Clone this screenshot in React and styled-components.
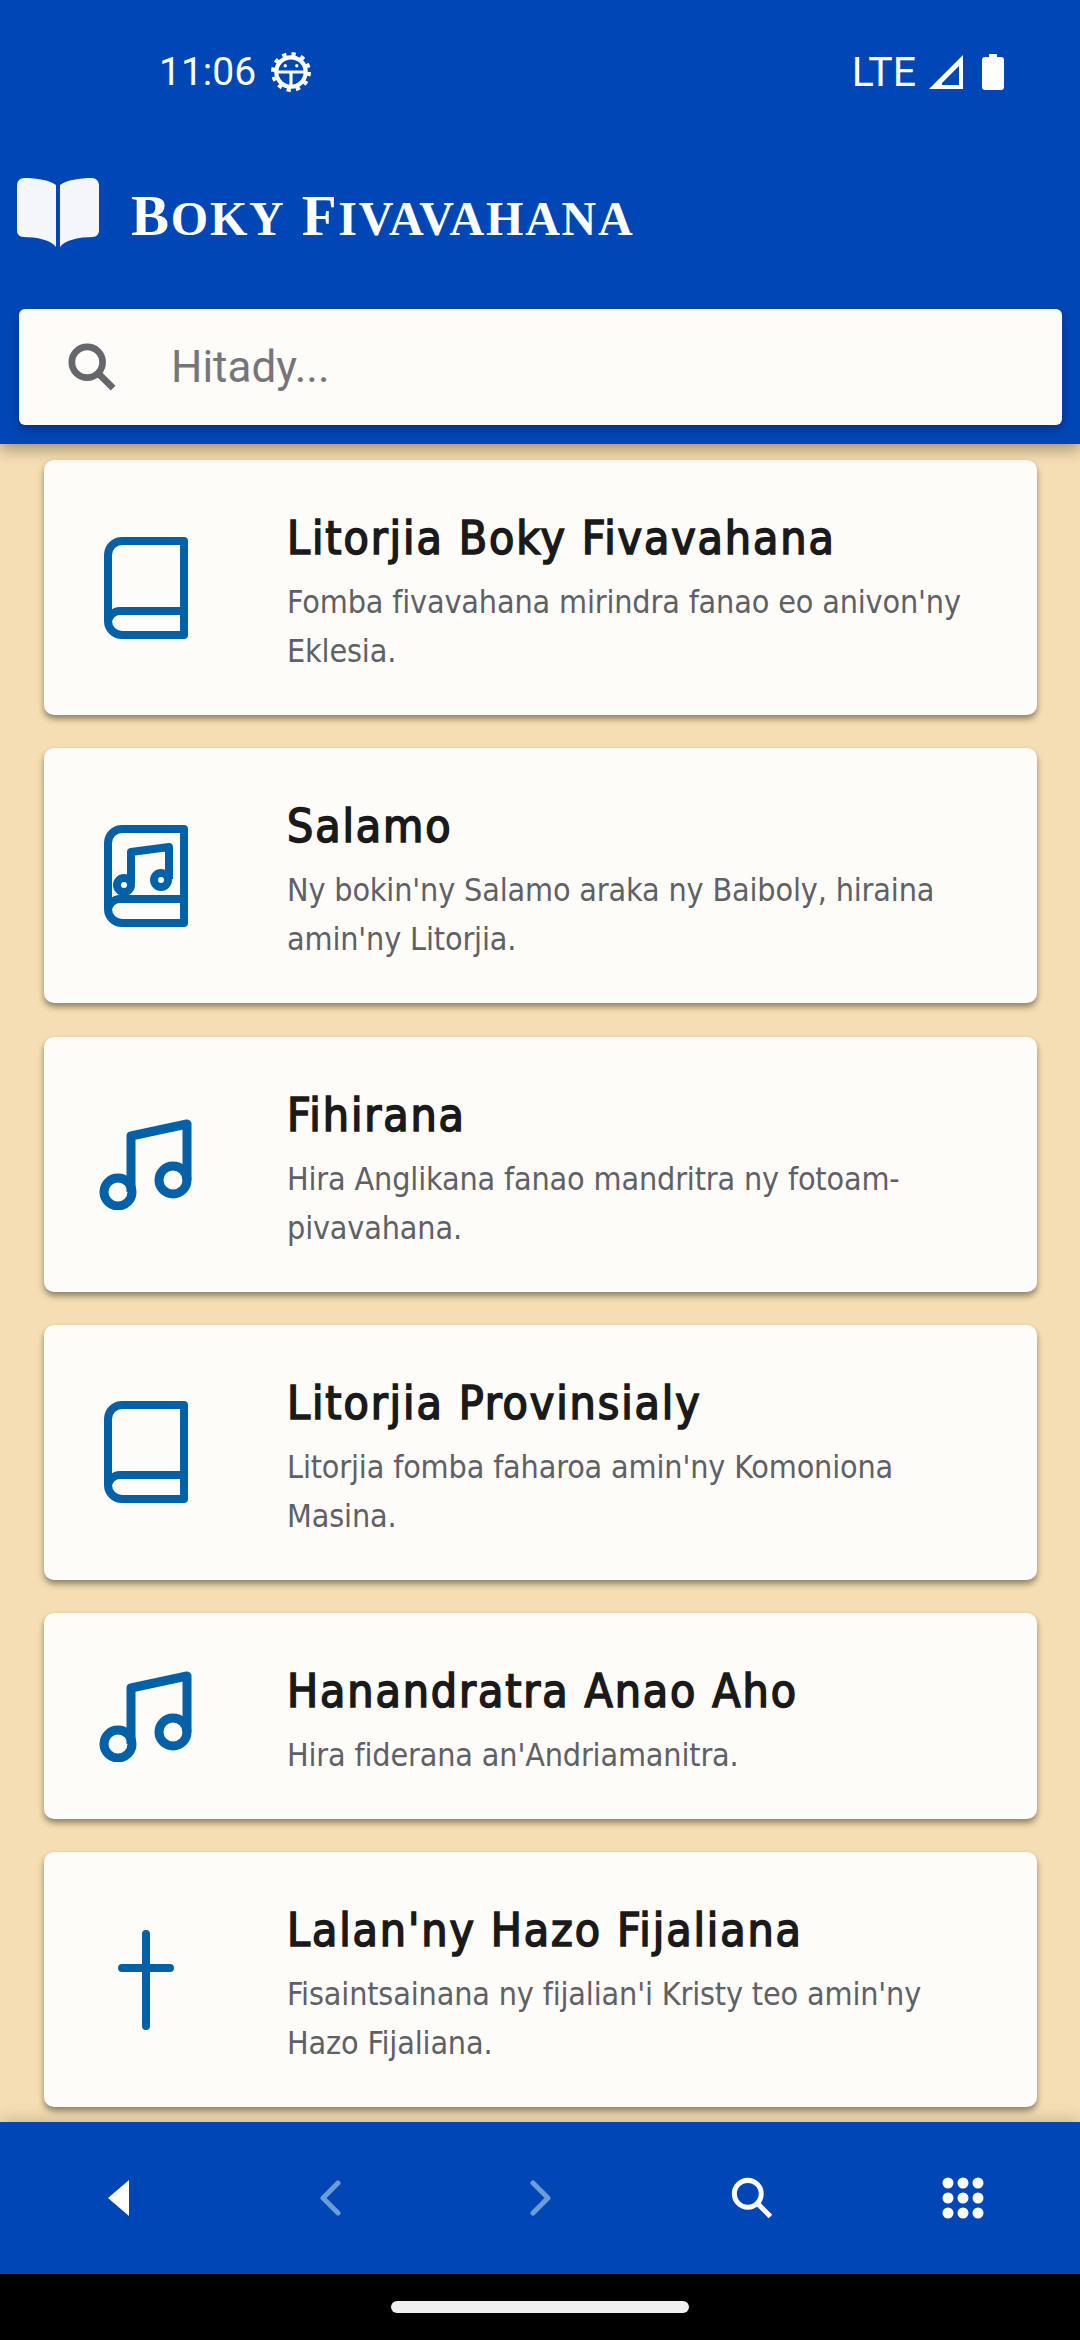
import React from 'react';
import styled, { createGlobalStyle } from 'styled-components';

const Global = createGlobalStyle`
  html, body { margin: 0; padding: 0; background: #000; }
  * { box-sizing: border-box; }
`;

const Screen = styled.div`
  width: 1080px;
  height: 2340px;
  display: flex;
  flex-direction: column;
  background: #000;
  overflow: hidden;
`;

const Header = styled.header`
  position: relative;
  z-index: 2;
  height: 444px;
  flex: none;
  background: #0046b5;
  box-shadow: 0 6px 14px rgba(0, 0, 0, 0.32);
  display: flex;
  flex-direction: column;
`;

const StatusBar = styled.div`
  height: 144px;
  padding: 0 76px 0 159px;
  display: flex;
  align-items: center;
  justify-content: space-between;
  color: #fff;
  font-family: Roboto, sans-serif;
`;

const StatusGroup = styled.div`
  display: flex;
  align-items: center;
  gap: ${p => p.$gap || 12}px;
`;

const StatusText = styled.span`
  font-size: ${p => p.$size}px;
`;

const Brand = styled.div`
  height: 138px;
  padding-left: 17px;
  display: flex;
  align-items: center;
  gap: 32px;
  color: #fff;
`;

const BrandTitle = styled.h1`
  margin: 4px 0 0;
  font-family: "Liberation Serif", serif;
  font-weight: 700;
  font-size: 57px;
  letter-spacing: 1.8px;
  line-height: 1;
`;

const SmallCaps = styled.span`
  font-size: 48px;
  text-transform: uppercase;
`;

const SearchBox = styled.div`
  margin: 27px 18px 0 19px;
  height: 116px;
  background: #fdfcf8;
  border-radius: 6px;
  box-shadow: 0 4px 8px rgba(0, 0, 0, 0.3);
  display: flex;
  align-items: center;
  padding-left: 49px;
  gap: 55px;
  font-family: Roboto, sans-serif;
  font-size: 44px;
  color: #75757a;
`;

const List = styled.main`
  flex: 1;
  min-height: 0;
  overflow: hidden;
  background: #f5deb3;
  padding: 16px 43px 0 44px;
  display: flex;
  flex-direction: column;
  gap: 33.3px;
`;

const Card = styled.article`
  flex: none;
  height: ${p => p.$short ? 206 : 255}px;
  background: #fdfcf8;
  border-radius: 10px;
  box-shadow: 0 4px 6px rgba(0, 0, 0, 0.42);
  display: flex;
  align-items: center;
`;

const CardIcon = styled.div`
  width: 243px;
  flex: none;
  display: flex;
  justify-content: center;
  color: #0061a8;
  padding-left: 20px;
  padding-right: 60px;
`;

const CardBody = styled.div`
  flex: 1;
  min-width: 0;
  padding: 9px 40px 0 0;
`;

const CardTitle = styled.h2`
  margin: 0 0 10px;
  font-family: "DejaVu Sans", sans-serif;
  font-stretch: condensed;
  font-weight: 400;
  font-size: 46px;
  letter-spacing: 1.9px;
  -webkit-text-stroke: 1.6px #1a1a1a;
  line-height: 60px;
  color: #1a1a1a;
`;

const CardText = styled.p`
  margin: 0;
  font-family: "DejaVu Sans", sans-serif;
  font-stretch: condensed;
  font-size: 32px;
  letter-spacing: -0.15px;
  line-height: 49px;
  color: #5f6066;
`;

const BottomNav = styled.nav`
  position: relative;
  z-index: 2;
  height: 152px;
  flex: none;
  background: #0046b5;
  box-shadow: 0 -4px 14px rgba(0, 0, 0, 0.15);
  padding-left: 2px;
  display: grid;
  grid-template-columns: repeat(5, 211px);
  justify-content: center;
  align-items: center;
  justify-items: center;
  color: #fff;
`;

const NavSlot = styled.div`
  display: flex;
  color: ${p => p.$dim ? '#6d9dd8' : '#fff'};
`;

const GestureBar = styled.div`
  height: 66px;
  flex: none;
  background: #000;
  display: flex;
  justify-content: center;
  padding-top: 27px;
`;

const HomePill = styled.div`
  width: 298px;
  height: 12px;
  border-radius: 6px;
  background: #f0f0f0;
`;

const BookShape = ({ children }) => (
  <svg width="84" height="102" viewBox="0 0 84 102" fill="none" stroke="currentColor" strokeWidth="8" strokeLinejoin="round">
    <path d="M80 4H18A14 14 0 0 0 4 18V84A14 14 0 0 0 18 98H80ZM4 86A12 12 0 0 1 16 74H80" />
    {children}
  </svg>
);

const MusicNote = () => (
  <svg width="94" height="92" viewBox="0 0 94 92" fill="none" stroke="currentColor" strokeWidth="9" strokeLinejoin="round">
    <path d="M32 74V18L88 6V62" />
    <circle cx="19" cy="74" r="14" />
    <circle cx="74" cy="62" r="14" />
  </svg>
);

const Cross = () => (
  <svg width="56" height="100" viewBox="0 0 56 100" fill="none" stroke="currentColor" strokeWidth="8" strokeLinecap="round">
    <path d="M28 4V96M4 38H52" />
  </svg>
);

const MusicBook = () => (
  <BookShape>
    <path d="M27 58V27L65 22V54" />
    <circle cx="20" cy="60" r="7" />
    <circle cx="57" cy="55" r="7" />
  </BookShape>
);

const SearchIcon = ({ size = 50, color = 'currentColor', width = 7 }) => (
  <svg width={size} height={size} viewBox="0 0 50 50" fill="none" stroke={color} strokeWidth={width}>
    <circle cx="20" cy="20" r="16" />
    <path d="M31 31L47 47" />
  </svg>
);

const GearIcon = () => (
  <svg width="42" height="42" viewBox="0 0 40 40" fill="none" stroke="#fff">
    <circle cx="20" cy="20" r="14" strokeWidth="4" />
    <circle cx="20" cy="20" r="17" strokeWidth="4" strokeDasharray="4 4.9" />
    <path d="M7 20H33M20 20V33" strokeWidth="3" />
    <circle cx="14.5" cy="14" r="1.6" fill="#fff" strokeWidth="0" />
    <circle cx="25.5" cy="14" r="1.6" fill="#fff" strokeWidth="0" />
  </svg>
);

const items = [
  { title: 'Litorjia Boky Fivavahana', text: "Fomba fivavahana mirindra fanao eo anivon'ny Eklesia.", icon: <BookShape /> },
  { title: 'Salamo', text: "Ny bokin'ny Salamo araka ny Baiboly, hiraina amin'ny Litorjia.", icon: <MusicBook /> },
  { title: 'Fihirana', text: 'Hira Anglikana fanao mandritra ny fotoam-pivavahana.', icon: <MusicNote /> },
  { title: 'Litorjia Provinsialy', text: "Litorjia fomba faharoa amin'ny Komoniona Masina.", icon: <BookShape /> },
  { title: 'Hanandratra Anao Aho', text: "Hira fiderana an'Andriamanitra.", icon: <MusicNote />, short: true },
  { title: "Lalan'ny Hazo Fijaliana", text: "Fisaintsainana ny fijalian'i Kristy teo amin'ny Hazo Fijaliana.", icon: <Cross /> },
];

export default function App() {
  return (
    <Screen>
      <Global />
      <Header>
        <StatusBar>
          <StatusGroup $gap={14}>
            <StatusText $size={39}>11:06</StatusText>
            <GearIcon />
          </StatusGroup>
          <StatusGroup $gap={12}>
            <StatusText $size={41}>LTE</StatusText>
            <svg width="36" height="36" viewBox="0 0 36 36">
              <path d="M35 1V35H1Z M31 12L14 29V31H31Z" fill="#fff" fillRule="evenodd" />
            </svg>
            <svg width="22" height="36" viewBox="0 0 22 36" style={{ marginLeft: 6 }}>
              <path d="M7 0H15V3H19A3 3 0 0 1 22 6V33A3 3 0 0 1 19 36H3A3 3 0 0 1 0 33V6A3 3 0 0 1 3 3H7Z" fill="#fff" />
            </svg>
          </StatusGroup>
        </StatusBar>
        <Brand>
          <svg width="82" height="70" viewBox="0 0 82 70">
            <path d="M7 0C20 0 32 2 39 7V69C34 62 20 59 6 59A6 6 0 0 1 0 53V7A7 7 0 0 1 7 0Z" fill="#f4f6fb" />
            <path d="M75 0C62 0 50 2 43 7V69C48 62 62 59 76 59A6 6 0 0 0 82 53V7A7 7 0 0 0 75 0Z" fill="#f4f6fb" />
          </svg>
          <BrandTitle>B<SmallCaps>oky</SmallCaps> F<SmallCaps>ivavahana</SmallCaps></BrandTitle>
        </Brand>
        <SearchBox>
          <SearchIcon size={48} color="#66676c" />
          <span>Hitady...</span>
        </SearchBox>
      </Header>
      <List>
        {items.map(item => (
          <Card key={item.title} $short={item.short}>
            <CardIcon>{item.icon}</CardIcon>
            <CardBody>
              <CardTitle>{item.title}</CardTitle>
              <CardText>{item.text}</CardText>
            </CardBody>
          </Card>
        ))}
      </List>
      <BottomNav>
        <NavSlot>
          <svg width="24" height="36" viewBox="0 0 24 36"><path d="M22 0V36L1 18Z" fill="currentColor" /></svg>
        </NavSlot>
        <NavSlot $dim>
          <svg width="24" height="36" viewBox="0 0 24 36" fill="none" stroke="currentColor" strokeWidth="5" strokeLinecap="round" strokeLinejoin="round"><path d="M20 3L5 18L20 33" /></svg>
        </NavSlot>
        <NavSlot $dim>
          <svg width="24" height="36" viewBox="0 0 24 36" fill="none" stroke="currentColor" strokeWidth="5" strokeLinecap="round" strokeLinejoin="round"><path d="M4 3L19 18L4 33" /></svg>
        </NavSlot>
        <NavSlot>
          <SearchIcon size={42} width={6} />
        </NavSlot>
        <NavSlot>
          <svg width="42" height="42" viewBox="0 0 42 42" fill="currentColor">
            {[6, 21, 36].map(y => [6, 21, 36].map(x => <circle key={`${x}-${y}`} cx={x} cy={y} r="5.5" />))}
          </svg>
        </NavSlot>
      </BottomNav>
      <GestureBar><HomePill /></GestureBar>
    </Screen>
  );
}
